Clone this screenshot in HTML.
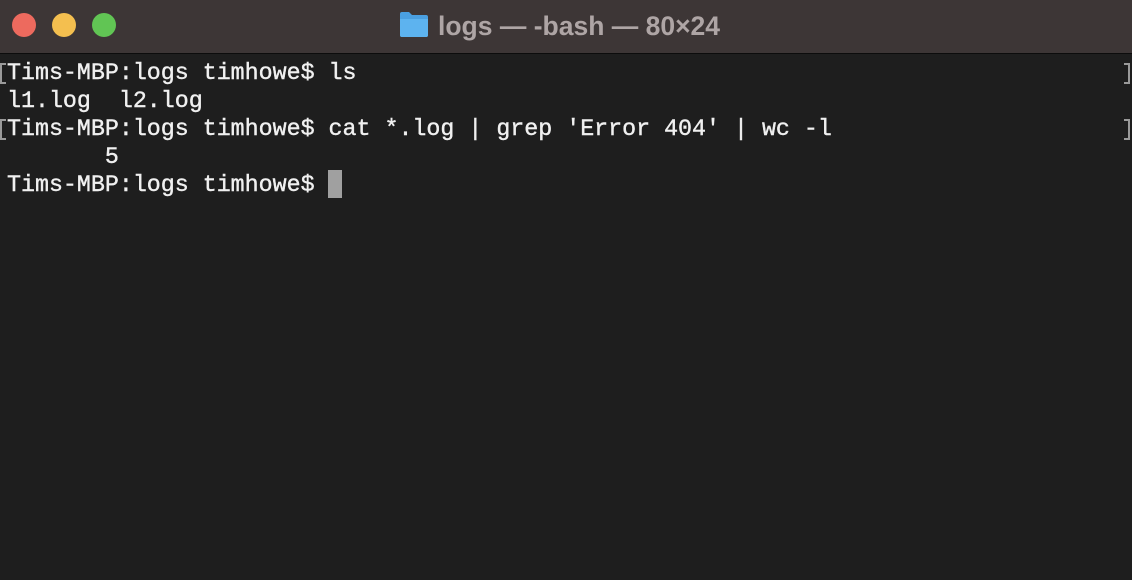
<!DOCTYPE html>
<html><head><style>
html,body{margin:0;padding:0;width:1132px;height:580px;overflow:hidden;background:#1e1e1e}
.tb{position:absolute;left:0;top:0;width:1132px;height:53px;background:#3d3636;border-bottom:1px solid #0c0c0c}
.dot{position:absolute;top:13px;width:24px;height:24px;border-radius:50%}
.title{position:absolute;top:11px;left:438px;font:bold 26.5px "Liberation Sans",sans-serif;color:#aea5a5;white-space:nowrap}
.term{position:absolute;left:7px;top:59px;font:23.3px/28px "Liberation Mono",monospace;color:#f0f0f0;white-space:pre;-webkit-text-stroke:0.4px #f0f0f0}
.br{position:absolute;width:4px;height:17px;border:2px solid #9a9a9a;}
.cur{position:absolute;left:328px;top:170px;width:14px;height:28px;background:#a0a0a0}
</style></head><body>
<div class="tb">
<div class="dot" style="left:12px;background:#ed6a5e"></div>
<div class="dot" style="left:52px;background:#f4bf4f"></div>
<div class="dot" style="left:92px;background:#61c554"></div>
<svg style="position:absolute;left:399px;top:11px" width="30" height="27" viewBox="0 0 30 27"><path d="M1 3 Q1 1 3 1 H10 L13 4 H27 Q29 4 29 6 V24 Q29 26 27 26 H3 Q1 26 1 24 Z" fill="#4a9fe0"/><path d="M1 8 H29 V24 Q29 26 27 26 H3 Q1 26 1 24 Z" fill="#5db3ef"/></svg>
<div class="title">logs — -bash — 80×24</div>
</div>
<div class="br" style="left:0;top:63px;border-right:none"></div>
<div class="br" style="left:1124px;top:63px;border-left:none"></div>
<div class="br" style="left:0;top:119px;border-right:none"></div>
<div class="br" style="left:1124px;top:119px;border-left:none"></div>
<div class="term">Tims-MBP:logs timhowe$ ls
l1.log  l2.log
Tims-MBP:logs timhowe$ cat *.log | grep 'Error 404' | wc -l
       5
Tims-MBP:logs timhowe$ </div>
<div class="cur"></div>
</body></html>
